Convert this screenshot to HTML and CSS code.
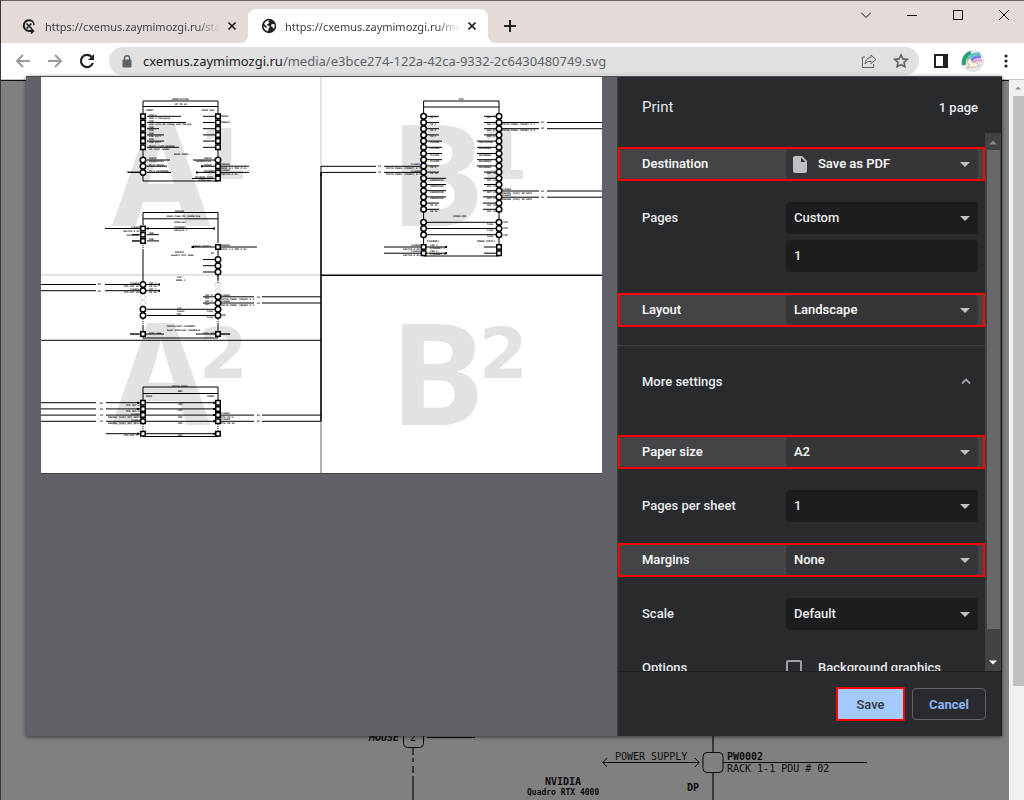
FILE: index.html
```html
<!DOCTYPE html>
<html lang="en">
<head>
<meta charset="utf-8">
<title>Print</title>
<link rel="stylesheet" href="styles.css">
</head>
<body>
<div class="window">
  <header class="titlebar">
    <div class="tab">
      <svg class="favicon" viewBox="0 0 16 16" fill="none" stroke="#202124" stroke-width="2"><path d="M11 3A5.4 5.4 0 1 0 8 13h4"/><path d="M10 10.500 12.500 13 10 15.500M5.500 5.500l5 5M10.500 5.500l-5 5" stroke-width="1.600"/><path d="M11 2.800q2 2 2 4.500" stroke-width="1.500"/></svg>
      <span class="tab-title">https://cxemus.zaymimozgi.ru/sta</span>
      <button class="tab-close" aria-label="Close tab"><svg viewBox="0 0 8 8"><path d="M0.500.500l7 7M7.500.500l-7 7"/></svg></button>
    </div>
    <div class="tab tab-active">
      <svg class="favicon" viewBox="0 0 16 16"><circle cx="8" cy="8" r="7.200" fill="#202124"/><path d="M9 2.300c-2 .4-2 1.700-.8 2.200 0 1.600-2 1-2.200 2.200-.2 1 2.200.6 2.600 1.800.3 1-.9 1.200-1 2.400l-.6 2.300c-2.600-.4-4.500-2.600-4.600-5.100l3.200 2.100V8.300L3 6.100C3.800 4 6.200 2 9 2.300zM10.600 6.200l2.700-.2c.6 1.600.4 3.500-.6 4.900l-1.100-1.900-1.700-.7z" fill="#fff"/></svg>
      <span class="tab-title">https://cxemus.zaymimozgi.ru/me</span>
      <button class="tab-close" aria-label="Close tab"><svg viewBox="0 0 8 8"><path d="M0.500.500l7 7M7.500.500l-7 7"/></svg></button>
    </div>
    <button class="new-tab" aria-label="New tab"><svg viewBox="0 0 12 12"><path d="M6 0v12M0 6h12"/></svg></button>
    <div class="window-buttons">
      <button aria-label="Search tabs"><svg viewBox="0 0 10 10"><path d="M0 2.500l5 5 5-5"/></svg></button>
      <button aria-label="Minimize"><svg viewBox="0 0 10 10"><path d="M0 5.500h10"/></svg></button>
      <button aria-label="Maximize"><svg viewBox="0 0 10 10"><path d="M.5.500h9v9h-9z"/></svg></button>
      <button aria-label="Close"><svg viewBox="0 0 10 10"><path d="M0 0l10 10M10 0L0 10"/></svg></button>
    </div>
  </header>

  <nav class="toolbar">
    <button class="tool muted" aria-label="Back"><svg viewBox="0 0 16 16"><path d="M15 8H2M8 2L2 8l6 6"/></svg></button>
    <button class="tool muted" aria-label="Forward"><svg viewBox="0 0 16 16"><path d="M1 8h13M8 2l6 6-6 6"/></svg></button>
    <button class="tool" aria-label="Reload"><svg viewBox="0 0 16 16"><path d="M13.800 10A6.100 6.100 0 1 1 12.500 3.800" stroke-width="2.200"/><path d="M15 1v6H9z" fill="#202124" stroke="none"/></svg></button>
    <div class="omnibox">
      <svg class="lock" viewBox="0 0 10 13"><path d="M1 5h8v7H1z" fill="#5f6368" stroke="#5f6368"/><path d="M2.500 5V3.300a2.500 2.500 0 0 1 5 0V5" fill="none" stroke="#5f6368" stroke-width="1.500"/></svg>
      <a class="address" href="#"><span class="host">cxemus.zaymimozgi.ru</span>/media/e3bce274-122a-42ca-9332-2c6430480749.svg</a>
      <button class="tool small" aria-label="Share"><svg viewBox="0 0 16 16"><path d="M4 4H1.500v10.500h11V11M10 2l5 4.500-5 4V8Q6 8 4 11q.5-6 6-6.500z"/></svg></button>
      <button class="tool small" aria-label="Bookmark"><svg viewBox="0 0 16 16"><path d="M8 1.800l1.900 4.100 4.400.5-3.300 3 .9 4.400L8 11.600l-3.900 2.200.9-4.400-3.300-3 4.400-.5z" stroke-width="1.600"/></svg></button>
    </div>
    <button class="tool" aria-label="Side panel"><svg viewBox="0 0 16 16"><path d="M1 1h14v14H1z" fill="#202124" stroke="none"/><path d="M3 3h7v10H3z" fill="#fff" stroke="none"/></svg></button>
    <button class="tool avatar" aria-label="Profile"><svg viewBox="0 0 22 22"><circle cx="11" cy="11" r="11" fill="#e6e4e6" stroke="none"/><path d="M2 15A10 10 0 0 1 9 3" stroke="#2f9e78" stroke-width="4"/><path d="M6 12Q7 3 18 4" stroke="#5cc6c0" stroke-width="3"/><path d="M9 12q2-6 10-5" stroke="#7b7fe0" stroke-width="3"/><path d="M11 13q3-4 9-2" stroke="#e59ad4" stroke-width="2"/><path d="M5 12l3-4 2 4 5 1 3 3-2-1-2 2h-4l-5 1 3-3z" fill="#faf2e6" stroke="#d4ba9c" stroke-width="1"/></svg></button>
    <button class="tool menu" aria-label="Menu"><svg viewBox="0 0 4 16"><g fill="#202124" stroke="none"><circle cx="2" cy="3" r="1.600"/><circle cx="2" cy="8" r="1.600"/><circle cx="2" cy="13" r="1.600"/></g></svg></button>
  </nav>

  <main class="viewport">
    <div class="canvas">
      <svg class="schematic" width="1009" height="720" viewBox="1 80 1009 720" fill="none" stroke="#0c0c0c" stroke-width="1">
        <path d="M0 80.500h1010"/>
        <path d="M413 776v24M713 736v17M713 773v27" stroke="#383838" stroke-width="2"/>
        <path d="M413 748v28" stroke="#383838" stroke-width="2" stroke-dasharray="7 3 4 4"/>
        <rect x="403.500" y="727.500" width="20" height="20" rx="4"/>
        <rect x="703" y="752.500" width="20" height="20" rx="4"/>
        <path d="M427 737.500h48M603 762.500h96M607 758l-4 4.500 4 4.500M695 758l4 4.500-4 4.500M723 762.500h144"/>
        <g class="schematic-text">
          <text x="369" y="741" font-style="italic" font-weight="bold">MOUSE</text>
          <text x="410" y="741">2</text>
          <text x="615" y="760">POWER SUPPLY</text>
          <text x="727" y="760" font-weight="bold">PW0002</text>
          <text x="727" y="772">RACK 1-1 PDU # 02</text>
          <text x="545" y="785" font-weight="bold">NVIDIA</text>
          <text x="527" y="795" class="fine">Quadro RTX 4000</text>
          <text x="687" y="791" font-weight="bold">DP</text>
        </g>
      </svg>
    </div>
    <div class="page-scroll"><svg viewBox="0 0 14 16"><path d="M3 10h8L7 6z" fill="#8a8a8a"/></svg><div class="page-thumb"></div></div>

    <section class="dialog" role="dialog" aria-label="Print">
      <div class="preview">
        <svg class="sheet" viewBox="41 77 561 396" fill="none" stroke="#000" stroke-width="1">
          <g class="watermark"><text x="112" y="226">A</text><text x="390" y="226">B</text><text x="112" y="425">A</text><text x="390" y="425">B</text></g>
          <g class="watermark-index"><text x="199" y="179">1</text><text x="479" y="179">1</text><text x="199" y="378">2</text><text x="479" y="378">2</text></g>
          <path d="M321 77v89M41 275h280" stroke="#c6c6c6"/>
          <path d="M321 421v52" stroke="#666"/>
          <path d="M320.500 275.200H602M321 172v249" stroke-width="1.600"/>
          <path d="M41 340.300h280M321 166v10"/>

          <!-- Workstation block -->
          <path d="M143 101h75v80h-75zM143 106.500h75"/>
          <path d="M147 116.300h34M147 122.500h39M147 128.700h12M147 134.900h17M147 141.100h17M147 147.300h32M203 116.300h12M203 122.500h12M203 128.700h12M203 134.900h12M203 141.100h12M203 147.300h12M147 160h23M147 166.200h20M147 172.400h24M193 160h22M202 166.200h13M197 172.400h18M192 178.500h23M218 166.200h31M218 172.400h31M128 172.400h12"/>
          <g class="port-square"><path d="M143 116.300v31.100M218 116.300v31.100M218 166.200v12.500"/></g>
          <g class="port-square inner"><path d="M143 116.300v31.100M218 116.300v31.100M218 166.200v12.500"/></g>
          <g class="port-round"><path d="M143 160v12.500M218 160v.1"/></g>
          <g class="port-round inner"><path d="M143 160v12.500M218 160v.1"/></g>

          <!-- Engine block -->
          <path d="M143 225v-12.500h75V243M143 218.800h75M143 250v32M143 325v13h75v-14M218 250v30"/>
          <path d="M105 228.500h110M147 234.700h12M147 240.900h12M132 234.700h8M132 240.900h8M191 247h66M203 259.500h12M203 265.700h12M203 272h12M41 284.500h55M105 284.500h54M41 290.700h55M105 290.700h54M203 296.800h51M262 296.800h59M203 303h51M262 303h59M147 309.300h68M147 315.500h68M130 334h34M196 334h34"/>
          <path d="M143 241v9M218 272v12M143 319v6M218 319v6" stroke-dasharray="1 1"/>
          <g class="port-dashed"><circle cx="143" cy="297" r="2.500"/><circle cx="143" cy="303" r="2.500"/><circle cx="218" cy="284.500" r="2.500"/><circle cx="218" cy="290.700" r="2.500"/></g>
          <g class="port-square"><path d="M143 228.500v12.500M218 247v.1M143 334v.1M218 334v.1"/></g>
          <g class="port-square inner"><path d="M143 228.500v12.500M218 247v.1M143 334v.1M218 334v.1"/></g>
          <g class="port-round"><path d="M143 284.500v6.300M143 309.300v6.300M218 259.500v12.500M218 296.800v18.700"/></g>
          <g class="port-round inner"><path d="M143 284.500v6.300M143 309.300v6.300M218 259.500v12.500M218 296.800v18.700"/></g>

          <!-- Patch panel block -->
          <path d="M143 424v-37h75v37M143 393.500h75M143 436.500h75"/>
          <path d="M143 424v8M218 424v8" stroke-dasharray="1 1"/>
          <path d="M41 402.700h55M106 402.700h112M41 408.900h55M106 408.900h112M41 415.100h55M106 415.100h148M41 421.300h55M106 421.300h148M106 433.700h112M262 415.100h59M262 421.300h59"/>
          <g class="port-square"><path d="M143 402.700v18.700M218 402.700v18.700M143 433.700v.1M218 433.700v.1"/></g>
          <g class="port-square inner"><path d="M143 402.700v18.700M218 402.700v18.700M143 433.700v.1M218 433.700v.1"/></g>

          <!-- Matrix block -->
          <path d="M423.600 101H499v155h-75.400zM423.600 107H499"/>
          <path d="M427 116.300h12M427 122.500h12M427 128.700h12M427 134.900h12M427 141.100h15M427 147.300h15M427 153.500h15M427 159.700h15M427 165.900h12M427 172.100h12M427 178.300h19M427 184.500h19M427 190.700h19M427 196.900h19M427 203.100h12M427 209.300h12"/>
          <path d="M484 116.300h12M484 122.500h12M484 128.700h12M484 134.900h12M477 141.100h19M477 147.300h19M477 153.500h19M477 159.700h19M477 165.900h19M484 172.100h12M484 178.300h12M484 184.500h12M483 190.700h13M483 196.900h13M483 203.100h13M483 209.300h13"/>
          <path d="M321 166.300h55M384 166.300h40M321 172.400h55M384 172.400h40M499 122.500h40M547 122.500h55M499 128.700h40M547 128.700h55M499 191h40M547 191h55M499 197.200h40M547 197.200h55M427 222.300h69M427 228.500h69M427 234.700h69M384 247h63M384 253.200h63M484 247h12M484 253.200h12"/>
          <g class="port-round"><path d="M423.600 116.300v93.100M499 116.300v93.100M423.600 222.300v12.500M499 222.300v12.500"/></g>
          <g class="port-round inner"><path d="M423.600 116.300v93.100M499 116.300v93.100M423.600 222.300v12.500M499 222.300v12.500"/></g>
          <g class="port-square"><path d="M423.600 247v6.300M499 247v6.300"/></g>
          <g class="port-square inner"><path d="M423.600 247v6.300M499 247v6.300"/></g>

          <path class="arrows" d="M147 228.500h2M213 228.500h2M192 247h2M158 284.500h2M158 290.700h2M201 166.200h2M196 172.400h2M445 247h2M445 253.200h2M139 402.700h-2M139 408.900h-2M139 433.700h-2M213 402.700h2M213 408.900h2M213 415.100h2M213 421.300h2M213 433.700h2"/>

          <g class="labels" font-size="2.500">
            <text x="172" y="100">WORKSTATION</text><text x="175" y="105">HP Z8 G4</text><text x="146" y="111">FRONT</text><text x="202" y="111">REAR USB</text>
            <text x="149" y="116">USB-C</text><text x="149" y="118.500">USB 3 charging</text><text x="149" y="122">USB</text><text x="149" y="125">USB with HP Sleep and Charge</text><text x="149" y="128">USB</text><text x="149" y="131">USB</text><text x="149" y="134">USB</text><text x="149" y="137">USB port</text><text x="149" y="140">USB</text><text x="149" y="143">USB port</text><text x="149" y="147">MEDIA CARD READER</text><text x="149" y="150">SD card reader</text><text x="174" y="155">REAR PANEL</text>
            <text x="149" y="159">AUDIO</text><text x="149" y="162">Headphones</text><text x="149" y="166">PS/2 MOUSE</text><text x="149" y="172">PS/2 KEYBOARD</text><text x="127" y="173">KEYBOARD</text><text x="204" y="159">AUDIO</text><text x="196" y="162">Headphones</text><text x="204" y="166">POWER</text><text x="204" y="172">NETWORK</text><text x="195" y="178">NETWORK RJ45</text><text x="199" y="181">Ethernet</text><text x="221" y="117">MOUSE</text><text x="221" y="123">DONGLE</text><text x="221" y="165">PW0001</text><text x="221" y="169">RACK 1-1 PDU # 01</text><text x="221" y="171">CL0001</text><text x="221" y="175">SWITCH # 01</text>
            <text x="175" y="212">ENGINE</text><text x="167" y="217">Real-time 3D rendering</text><text x="174" y="223">ethernet</text><text x="174" y="228">ETHERNET</text><text x="174" y="231">network 1</text><text x="131" y="228">CL0002</text><text x="123" y="232">SWITCH # 02</text><text x="149" y="234">USB</text><text x="149" y="240">USB</text><text x="127" y="236">KEYBOARD</text><text x="132" y="242">MOUSE</text><text x="193" y="247">POWER SUPPLY</text><text x="221" y="246">PW0002</text><text x="221" y="250">RACK 1-1 PDU # 02</text><text x="175" y="253">NVIDIA</text><text x="171" y="256">Quadro RTX 4000</text><text x="211" y="254">DP</text><text x="177" y="278">AJA</text><text x="176" y="281">KONA 4</text>
            <text x="130" y="284">CL0003</text><text x="124" y="287">MTX OUT 01</text><text x="130" y="290">CL0004</text><text x="124" y="293">MTX OUT 02</text><text x="149" y="284">SDI 1</text><text x="149" y="287">IN 3G</text><text x="149" y="290">SDI 2</text><text x="149" y="293">IN 3G</text><text x="205" y="296">SDI 3</text><text x="205" y="299">OUT</text><text x="205" y="302">SDI 4</text><text x="205" y="305">OUT</text><text x="221" y="296">CL0005</text><text x="221" y="300">PATCH PANEL [REAR] # 3</text><text x="221" y="302">CL0006</text><text x="221" y="306">PATCH PANEL [REAR] # 4</text><text x="177" y="309">LTC</text><text x="177" y="312">input</text><text x="177" y="315">REF</text><text x="207" y="312">loop</text><text x="207" y="318">loop</text><text x="221" y="316">75R</text><text x="167" y="327">MEDIALIGHT ETHERNET</text><text x="167" y="331">Dual Ethernet 1000Base</text><text x="130" y="335">SWITCH</text><text x="149" y="334">SFP+ 10G</text><text x="203" y="334">SFP+ 10G</text><text x="221" y="335">SWITCH</text>
            <text x="172" y="387">PATCH PANEL</text><text x="178" y="392">BNC</text><text x="146" y="397">REAR</text><text x="207" y="397">FRONT</text><text x="178" y="405">SDI</text><text x="178" y="411">SDI</text><text x="178" y="418">SDI</text><text x="178" y="424">SDI</text><text x="178" y="436">SDI</text><text x="126" y="406">MTX OUT 1</text><text x="126" y="412">MTX OUT 2</text><text x="131" y="415">CL0005</text><text x="108" y="418">ENGINE [AJA] OUT SDI3</text><text x="131" y="421">CL0006</text><text x="108" y="424">ENGINE [AJA] OUT SDI4</text><text x="124" y="436">MTX OUT 9</text><text x="221" y="414">CL0007</text><text x="221" y="418">MTX IN 9</text><text x="221" y="420">CL0008</text><text x="221" y="424">MTX IN 10</text>
            <text x="98" y="285">B1</text><text x="98" y="292">B1</text><text x="100" y="404">B1</text><text x="100" y="410">B1</text><text x="100" y="416">A2</text><text x="100" y="422">A2</text><text x="257" y="298">A2</text><text x="257" y="304">A2</text><text x="257" y="416">B1</text><text x="257" y="422">B1</text>
            <text x="459" y="100">MTX</text><text x="453" y="217">VIDEO REF</text><text x="427" y="242">ETHERNET</text><text x="477" y="242">POWER SUPPLY</text><text x="378" y="167">A2</text><text x="378" y="173">A2</text><text x="541" y="123">A2</text><text x="541" y="129">A2</text><text x="541" y="192">A2</text><text x="541" y="198">A2</text>
            <text x="430" y="118">IN 1</text><text x="430" y="125">IN 2</text><text x="430" y="131">IN 3</text><text x="430" y="137">IN 4</text><text x="430" y="143">PLAYER</text><text x="430" y="149">PLAYER</text><text x="430" y="156">PLAYER</text><text x="430" y="162">PLAYER</text><text x="430" y="168">IN 9</text><text x="430" y="174">IN 10</text><text x="430" y="181">CONVERTER</text><text x="430" y="187">CONVERTER</text><text x="430" y="193">CONVERTER</text><text x="430" y="199">CONVERTER</text><text x="430" y="206">IN 15</text><text x="430" y="212">IN 16</text>
            <text x="487" y="118">OUT 1</text><text x="487" y="125">OUT 2</text><text x="487" y="131">OUT 3</text><text x="487" y="137">OUT 4</text><text x="479" y="143">MULTIVIEW</text><text x="479" y="149">RECORDER</text><text x="479" y="156">RECORDER</text><text x="479" y="162">RECORDER</text><text x="479" y="168">RECORDER</text><text x="487" y="174">OUT 10</text><text x="487" y="181">OUT 11</text><text x="487" y="187">OUT 12</text><text x="487" y="193">OUT 13</text><text x="487" y="199">OUT 14</text><text x="487" y="206">OUT 15</text><text x="487" y="212">OUT 16</text><text x="487" y="225">loop</text><text x="487" y="231">loop</text><text x="487" y="237">loop</text><text x="503" y="223">75R</text><text x="503" y="229">75R</text><text x="503" y="236">75R</text>
            <text x="411" y="165">CL0007</text><text x="386" y="169">PATCH PANEL [FRONT] # 3</text><text x="411" y="172">CL0008</text><text x="386" y="175">PATCH PANEL [FRONT] # 4</text><text x="502" y="125">PATCH PANEL [REAR] # 1</text><text x="502" y="131">PATCH PANEL [REAR] # 2</text><text x="502" y="190">CL0003</text><text x="502" y="194">ENGINE [AJA] IN SDI1</text><text x="502" y="196">CL0004</text><text x="502" y="200">ENGINE [AJA] IN SDI2</text><text x="411" y="246">CL0009</text><text x="403" y="250">SWITCH # 03</text><text x="411" y="252">CL0010</text><text x="403" y="256">SWITCH # 04</text><text x="430" y="246">LAN 1</text><text x="430" y="249">ETHERNET 1</text><text x="430" y="252">LAN 2</text><text x="430" y="255">ETHERNET 2</text>
          </g>
        </svg>
      </div>

      <form class="panel">
        <div class="panel-head"><h1>Print</h1><span class="count">1 page</span></div>
        <div class="panel-body">
          <div class="settings">
            <div class="row marked"><label for="dest">Destination</label><div class="control with-icon">
              <svg class="doc" viewBox="0 0 14 17"><path d="M2 0h7l5 5v10q0 2-2 2H2q-2 0-2-2V2q0-2 2-2z" fill="#bdc1c6"/><path d="M8 1.500V6h4.500z" fill="#363638"/></svg>
              <select id="dest"><option>Save as PDF</option></select></div></div>
            <div class="row"><label for="pages">Pages</label><div class="stack"><div class="control"><select id="pages"><option>Custom</option></select></div><input class="field" type="text" value="1" aria-label="Page range"></div></div>
            <div class="row marked"><label for="layout">Layout</label><div class="control"><select id="layout"><option>Landscape</option></select></div></div>
            <button class="more" type="button"><span>More settings</span><svg viewBox="0 0 10 10"><path d="M1 7.500l4-4 4 4" fill="none" stroke="#9aa0a6" stroke-width="1.800"/></svg></button>
            <div class="row marked"><label for="paper">Paper size</label><div class="control"><select id="paper"><option>A2</option></select></div></div>
            <div class="row"><label for="per">Pages per sheet</label><div class="control"><select id="per"><option>1</option></select></div></div>
            <div class="row marked"><label for="margins">Margins</label><div class="control"><select id="margins"><option>None</option></select></div></div>
            <div class="row"><label for="scale">Scale</label><div class="control"><select id="scale"><option>Default</option></select></div></div>
            <div class="row"><span class="group">Options</span><label class="check"><input type="checkbox">Background graphics</label></div>
          </div>
          <div class="panel-scroll">
            <svg viewBox="0 0 16 16"><path d="M4 11h8L8 7z" fill="#868686"/></svg>
            <div class="panel-thumb"></div>
            <svg viewBox="0 0 16 16"><path d="M4 6h8l-4 4z" fill="#fff"/></svg>
          </div>
        </div>
        <footer class="panel-foot"><button class="save" type="button">Save</button><button class="cancel" type="button">Cancel</button></footer>
      </form>
    </section>
  </main>
</div>
</body>
</html>
```
FILE: styles.css
```css
* { box-sizing: border-box; }
body { margin: 0; font-family: Roboto, "Liberation Sans", sans-serif; font-size: 13px; }
button { padding: 0; border: 0; background: none; font: inherit; color: inherit; }
svg { display: block; }

.window { display: flex; flex-direction: column; height: 100vh; overflow: hidden; border-left: 1px solid #3c3838; }

/* Tab strip */
.titlebar { display: flex; align-items: flex-end; height: 43px; padding-left: 7px; background: #e4dbd8; border-top: 1px solid #6b6465; }
.tab { position: relative; display: flex; align-items: center; width: 240px; height: 34px; padding: 0 12px 0 13px; font-family: "Noto Sans", sans-serif; font-size: 11px; color: #3c4043; }
.tab-active { background: #fff; border-radius: 8px 8px 0 0; }
.tab-active::before, .tab-active::after { content: ""; position: absolute; bottom: 0; width: 8px; height: 8px; }
.tab-active::before { right: 100%; background: radial-gradient(circle at 0 0, #e4dbd8 8px, #fff 8px); }
.tab-active::after { left: 100%; background: radial-gradient(circle at 100% 0, #e4dbd8 8px, #fff 8px); }
.favicon { width: 16px; height: 16px; margin-right: 8px; flex: none; }
.tab-title { flex: 1; overflow: hidden; white-space: nowrap; mask-image: linear-gradient(to left, transparent, #000 24px); }
.tab-close { margin-left: 8px; }
.tab-close svg { width: 8px; height: 8px; stroke: #202124; stroke-width: 1.600; }
.new-tab { margin: 0 0 11px 16px; }
.new-tab svg { width: 12px; height: 12px; stroke: #202124; stroke-width: 2; }
.window-buttons { display: flex; align-self: flex-start; margin: 0 -3px 0 auto; }
.window-buttons button { width: 46px; height: 28px; display: grid; place-items: center; }
.window-buttons svg { width: 10px; height: 10px; fill: none; stroke: #111; stroke-width: 1; }

/* Toolbar */
.toolbar { display: flex; align-items: center; height: 37px; padding: 0 10px 0 14px; background: #fff; border-bottom: 1px solid #c4c4c4; }
.tool { width: 16px; height: 16px; margin-right: 16px; flex: none; }
.tool svg { width: 100%; height: 100%; fill: none; stroke: #202124; stroke-width: 2; overflow: visible; }
.tool.muted svg { stroke: #9b9b9b; }
.tool.small svg { stroke: #5f6368; stroke-width: 1; }
.omnibox { display: flex; flex: 1; align-items: center; height: 28px; margin: 0 14px 0 -2px; padding: 0 10px 0 13px; border-radius: 14px; background: #e0e0e0; min-width: 0; }
.omnibox .tool:last-child { margin-right: 0; }
.lock { width: 10px; height: 13px; margin-right: 11px; flex: none; }
.address { flex: 1; overflow: hidden; white-space: nowrap; font-family: "Noto Sans", sans-serif; font-size: 13px; color: #5f6368; text-decoration: none; }
.host { color: #202124; }
.tool.avatar { width: 22px; height: 22px; margin: 0 20px 0 -3px; }
.tool.menu { width: 4px; margin-right: 6px; }

/* Page behind the dialog */
.viewport { position: relative; display: flex; flex: 1; min-height: 0; }
.canvas { flex: 1; overflow: hidden; background: #808080; }
.schematic-text { fill: #0c0c0c; stroke: none; font-family: "DejaVu Sans Mono", monospace; font-size: 10px; }
.schematic-text .fine { font-size: 8px; font-weight: bold; }
.page-scroll { width: 15px; padding: 0 1px 0 3px; background: #f0f0f0; border-left: 1px solid #fff; }
.page-scroll svg { width: 100%; height: 16px; }
.page-thumb { height: 82%; margin-right: -1px; background: #c1c1c1; }

/* Print dialog */
.dialog { position: absolute; inset: -4px 22px 64px 25px; display: flex; border-top: 1px solid #4a4d50; background: #292a2d; box-shadow: 0 1px 4px rgba(0, 0, 0, .6); }
.preview { flex: 1; padding: 0 15px; background: #5f6368; min-width: 0; }
.sheet { width: 100%; background: #fff; border-bottom: 1px solid #444; }
.watermark, .watermark-index { fill: #e2e2e2; stroke: none; font-family: "Noto Sans", sans-serif; font-weight: bold; font-size: 142px; }
.watermark-index { font-family: "DejaVu Sans", sans-serif; font-size: 70px; }
.port-round path, .port-square path { stroke-width: 7; stroke-dasharray: 0 6.200; stroke-linecap: round; }
.port-square path { stroke-linecap: square; stroke-width: 6; }
.port-round.inner path { stroke: #fff; stroke-width: 4; }
.port-square.inner path { stroke: #fff; stroke-width: 3; }
.port-dashed { stroke: #aaa; stroke-dasharray: 1 1; stroke-width: 1; }
.arrows { stroke-width: 2; }
.labels { fill: #000; stroke: none; font-family: "DejaVu Sans Mono", monospace; font-weight: bold; }

.panel { display: flex; flex-direction: column; flex: 0 0 385px; border-left: 1px solid #3f4044; border-right: 1px solid #1c1c1e; color: #e8eaed; font-weight: 500; }
.panel-head { display: flex; align-items: center; justify-content: space-between; height: 56px; padding: 4px 23px 0 24px; flex: none; }
.panel-head h1 { margin: 0; font-size: 15px; font-weight: 400; }
.panel-body { display: flex; flex: 1; min-height: 0; border-bottom: 1px solid #1f2022; }
.settings { display: flex; flex-direction: column; flex: 1; padding-top: 4px; overflow: hidden; }
.row { display: grid; flex: none; grid-template-columns: 144px 1fr; padding: 11px 7px 11px 24px; line-height: 32px; }
.marked { margin: 10px 0; padding: 0 5px 0 22px; border: 2px solid #f00; background: #434447; line-height: 30px; color: #fff; }
.control { display: grid; grid-template-columns: 1fr; height: 32px; border-radius: 4px; background: #1d1d1f; }
.marked .control { height: 30px; background: #363638; }
.control::after { content: ""; grid-area: 1 / 1; place-self: center end; margin-right: 8px; border: 5px solid transparent; border-top-color: #bdc1c6; border-bottom: 0; pointer-events: none; }
.control select { grid-area: 1 / 1; appearance: none; width: 100%; padding: 0 8px; border: 0; background: none; color: inherit; font: inherit; }
.with-icon select { padding-left: 32px; }
.doc { grid-area: 1 / 1; align-self: center; width: 14px; height: 17px; margin-left: 7px; }
.stack { display: grid; gap: 6px; }
.field { width: 100%; height: 32px; padding: 0 8px; border: 0; border-radius: 4px; background: #1d1d1f; color: inherit; font: inherit; }
.more { display: flex; flex: none; align-items: center; justify-content: space-between; width: 100%; margin: 8px 0 17px; padding: 8px 14px 0 24px; height: 63px; border-top: 1px solid #3f4044; }
.more svg { width: 10px; height: 10px; }
.check { display: flex; align-items: center; gap: 16px; }
.check input { appearance: none; width: 16px; height: 16px; margin: 0; border: 2px solid #9aa0a6; border-radius: 2px; }
.panel-scroll { display: flex; flex-direction: column; width: 16px; background: #424242; }
.panel-scroll svg { width: 16px; height: 17px; flex: none; }
.panel-thumb { width: 13px; height: 89%; margin: 0 0 auto 2px; background: #686868; }
.panel-foot { display: flex; align-items: center; justify-content: flex-end; gap: 7px; height: 64px; padding-right: 15px; flex: none; }
.save { width: 69px; height: 34px; border: 2px solid #f00; background: #a3cbff; color: #35363a; }
.cancel { width: 74px; height: 32px; border: 1px solid #5f6368; border-radius: 4px; color: #8ab4f8; font-weight: 700; }
```
